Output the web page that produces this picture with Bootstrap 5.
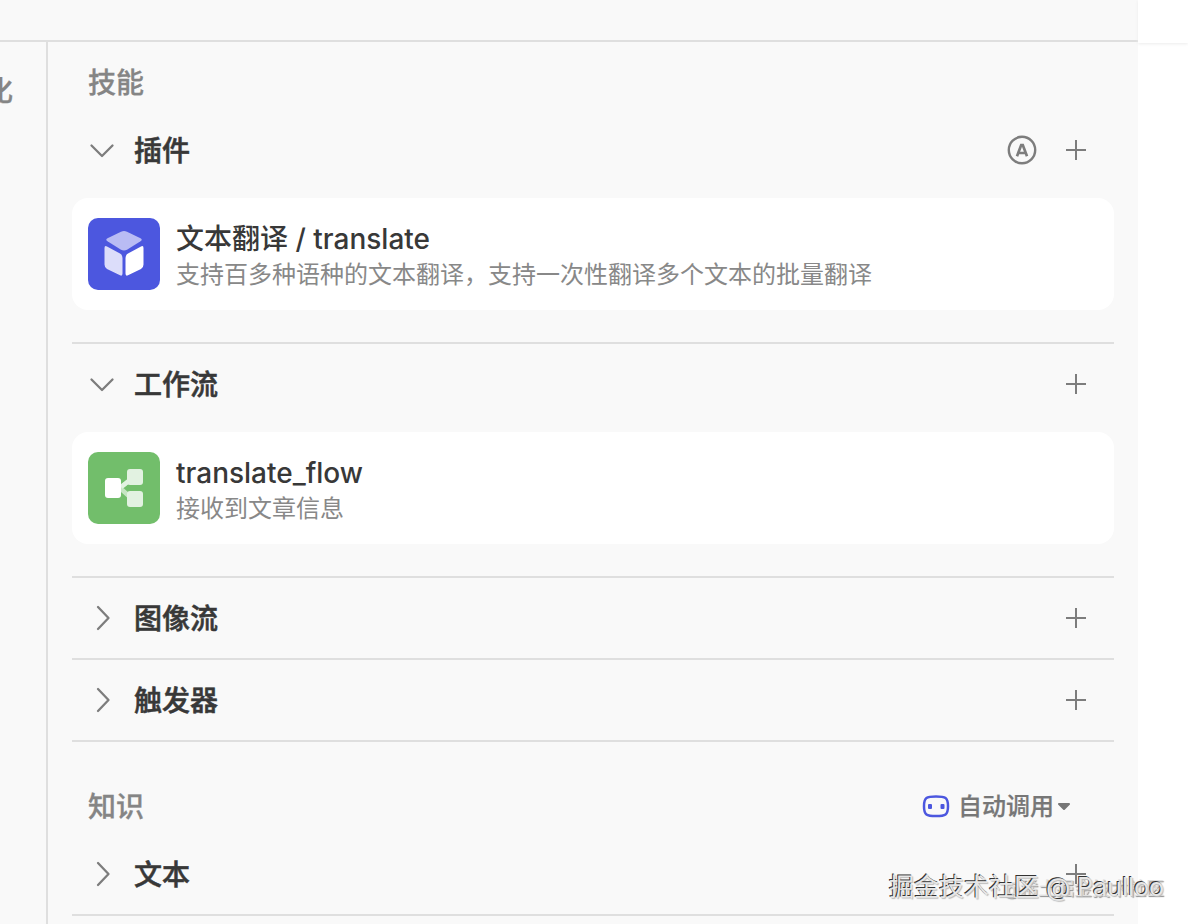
<!DOCTYPE html>
<html lang="zh-CN">
<head>
<meta charset="utf-8">
<meta name="viewport" content="width=device-width, initial-scale=1">
<title>技能</title>
<link href="https://cdn.jsdelivr.net/npm/bootstrap@5.3.0/dist/css/bootstrap.min.css" rel="stylesheet">
<style>
  body { font-family: Inter, "Noto Sans CJK SC", sans-serif; color: #383838; background: #fff; }
  .workspace { background: #f9f9f9; }
  .topbar { height: 42px; border-bottom: 2px solid #dfdfdf; }
  .prev-pane { width: 48px; border-right: 2px solid #dfdfdf; }
  .prev-pane span { font-size: 28px; line-height: 40px; padding: 29px 33px 0 0; font-weight: 500; color: #858585; -webkit-text-stroke: .01em; }
  .outer-side { width: 50px; }
  .outer-head { height: 43px; box-shadow: 0 1px 3px #ececec; }
  .skills { padding: 12px 24px 0; }
  .group-title { height: 56px; padding: 2px 16px 0; }
  .group-title h2 { font-size: 28px; line-height: 40px; font-weight: 500; color: #858585; -webkit-text-stroke: .01em; }
  .group-next { margin-top: 36px; }
  .skill { border-bottom: 2px solid #dfdfdf; }
  .skill-head { height: 80px; padding: 0 16px; }
  .skill-head h3 { font-size: 28px; line-height: 40px; padding-top: 2px; font-weight: 500; -webkit-text-stroke: .02em; }
  .toggle { gap: 18px; color: #383838; }
  .toggle svg, .tool svg { display: block; fill: none; stroke: #7d7d7d; }
  .tools { gap: 10px; }
  .tool { padding: 6px; }
  .skill-item { height: 112px; margin: 8px 0 32px; padding: 0 16px; gap: 16px; border-radius: 16px; background: #fff; }
  .skill-icon { width: 72px; height: 72px; border-radius: 10px; flex: none; }
  .item-text { padding-top: 2px; }
  .item-name { font-size: 28px; line-height: 40px; font-weight: 500; }
  .item-desc { font-size: 24px; line-height: 32px; font-weight: 400; color: #888; }
  .auto-call { font-size: 24px; line-height: 32px; font-weight: 500; color: #777; gap: 8px; padding-right: 28px; -webkit-text-stroke: .01em; }
  .stamp { right: 24px; bottom: 19px; font-size: 25px; line-height: 36px; color: #e6e6e6; text-shadow: -1px -1px 0 #333, 1px 1px 1px #bbb; pointer-events: none; }
  .stamp-small { right: 24px; bottom: 22px; font-size: 18px; line-height: 26px; color: #e0e0e0; text-shadow: 1px 1px 1px #888; pointer-events: none; }
</style>
</head>
<body>
<svg class="d-none">
  <symbol id="i-plus" viewBox="0 0 32 32"><path d="M16 6v20M6 16h20" stroke-width="2"/></symbol>
  <symbol id="i-down" viewBox="0 0 28 28"><path d="M3.500 9.500 14 20 24.500 9.500" stroke-width="2.300" stroke-linecap="round" stroke-linejoin="round"/></symbol>
  <symbol id="i-right" viewBox="0 0 28 28"><path d="M10 3 20.500 14 10 25" stroke-width="2.300" stroke-linecap="round" stroke-linejoin="round"/></symbol>
</svg>
<div class="d-flex min-vh-100 position-relative overflow-hidden">
  <div class="workspace d-flex flex-column flex-grow-1">
    <header class="topbar"></header>
    <div class="d-flex flex-grow-1">
      <aside class="prev-pane d-flex justify-content-end align-items-start overflow-hidden"><span class="text-nowrap">优化</span></aside>
      <main class="skills flex-grow-1">
        <div class="group-title d-flex align-items-center"><h2 class="m-0">技能</h2></div>
        <section class="skill">
          <div class="skill-head d-flex align-items-center justify-content-between">
            <button type="button" class="toggle btn p-0 border-0 d-flex align-items-center"><svg width="28" height="28"><use href="#i-down"/></svg><h3 class="m-0">插件</h3></button>
            <div class="tools d-flex align-items-center">
              <button type="button" class="tool btn border-0" aria-label="自动"><svg width="32" height="32" viewBox="0 0 32 32"><circle cx="16" cy="16" r="13.200" stroke-width="2.400"/><path d="M11 22.300 15.200 11h1.600L21 22.300M12.800 19h6.400" stroke-width="2.700"/></svg></button>
              <button type="button" class="tool btn border-0" aria-label="添加"><svg width="32" height="32"><use href="#i-plus"/></svg></button>
            </div>
          </div>
          <div class="skill-item d-flex align-items-center">
            <svg class="skill-icon" viewBox="0 0 72 72"><rect width="72" height="72" fill="#4c57df"/>
              <path d="M33 13.800q3-1.400 6 0l13.500 6.500q2.500 1.400 0 3L39 31.800q-3 1.600-6 0L19.500 23.300q-2.500-1.600 0-3z" fill="#b9bcf4"/>
              <path d="M16.500 30q0-3 2.500-1.600L32 35.500q2.500 1.500 2.500 4.500v15.500q0 3-2.500 1.800L19 51q-2.500-1.400-2.500-4.500z" fill="#dcddfa"/>
              <path d="M55.500 30q0-3-2.500-1.600L40 35.500q-2.500 1.500-2.500 4.500v15.500q0 3 2.500 1.800L53 51q2.500-1.400 2.500-4.500z" fill="#fff"/></svg>
            <div class="item-text"><div class="item-name">文本翻译 / translate</div><div class="item-desc">支持百多种语种的文本翻译，支持一次性翻译多个文本的批量翻译</div></div>
          </div>
        </section>
        <section class="skill">
          <div class="skill-head d-flex align-items-center justify-content-between">
            <button type="button" class="toggle btn p-0 border-0 d-flex align-items-center"><svg width="28" height="28"><use href="#i-down"/></svg><h3 class="m-0">工作流</h3></button>
            <button type="button" class="tool btn border-0" aria-label="添加"><svg width="32" height="32"><use href="#i-plus"/></svg></button>
          </div>
          <div class="skill-item d-flex align-items-center">
            <svg class="skill-icon" viewBox="0 0 72 72"><rect width="72" height="72" fill="#72be6b"/>
              <path d="M42 28 32 36l10 9" fill="none" stroke="#c6e5c3" stroke-width="4.500"/><path d="M42 28 33 35" fill="none" stroke="#e2f2e1" stroke-width="4.500"/>
              <rect x="39" y="17" width="16" height="16" rx="3" fill="#e2f2e1"/><rect x="39" y="39" width="16" height="16" rx="3" fill="#e2f2e1"/><rect x="17" y="26" width="16" height="20" rx="3" fill="#fff"/></svg>
            <div class="item-text"><div class="item-name">translate_flow</div><div class="item-desc">接收到文章信息</div></div>
          </div>
        </section>
        <section class="skill">
          <div class="skill-head d-flex align-items-center justify-content-between">
            <button type="button" class="toggle btn p-0 border-0 d-flex align-items-center"><svg width="28" height="28"><use href="#i-right"/></svg><h3 class="m-0">图像流</h3></button>
            <button type="button" class="tool btn border-0" aria-label="添加"><svg width="32" height="32"><use href="#i-plus"/></svg></button>
          </div>
        </section>
        <section class="skill">
          <div class="skill-head d-flex align-items-center justify-content-between">
            <button type="button" class="toggle btn p-0 border-0 d-flex align-items-center"><svg width="28" height="28"><use href="#i-right"/></svg><h3 class="m-0">触发器</h3></button>
            <button type="button" class="tool btn border-0" aria-label="添加"><svg width="32" height="32"><use href="#i-plus"/></svg></button>
          </div>
        </section>
        <div class="group-title group-next d-flex align-items-center justify-content-between">
          <h2 class="m-0">知识</h2>
          <button type="button" class="auto-call btn border-0 d-flex align-items-center">
            <svg width="28" height="28" viewBox="0 0 28 28" fill="none"><path d="M14 3.500c9.500 0 12 1 12 9.800s-2.500 9.800-12 9.800S2 22.100 2 13.300s2.500-9.800 12-9.800z" stroke="#4c57df" stroke-width="2.500"/><rect x="6" y="11" width="4" height="5" rx="1" fill="#4c57df"/><rect x="18.500" y="11" width="4" height="5" rx="1" fill="#4c57df"/></svg>
            <span class="d-flex align-items-center gap-1">自动调用<svg width="12" height="8" viewBox="0 0 12 8"><path d="M1 1h10L6 6z" fill="#777" stroke="#777" stroke-width="2" stroke-linejoin="round"/></svg></span>
          </button>
        </div>
        <section class="skill">
          <div class="skill-head d-flex align-items-center justify-content-between">
            <button type="button" class="toggle btn p-0 border-0 d-flex align-items-center"><svg width="28" height="28"><use href="#i-right"/></svg><h3 class="m-0">文本</h3></button>
            <button type="button" class="tool btn border-0" aria-label="添加"><svg width="32" height="32"><use href="#i-plus"/></svg></button>
          </div>
        </section>
      </main>
    </div>
  </div>
  <div class="outer-side"><div class="outer-head"></div></div>
  <div class="stamp-small position-absolute text-nowrap">@稀土掘金技术社区</div>
  <div class="stamp position-absolute text-nowrap">掘金技术社区 @ Paulloo</div>
</div>
<script src="https://cdn.jsdelivr.net/npm/bootstrap@5.3.0/dist/js/bootstrap.bundle.min.js"></script>
</body>
</html>
